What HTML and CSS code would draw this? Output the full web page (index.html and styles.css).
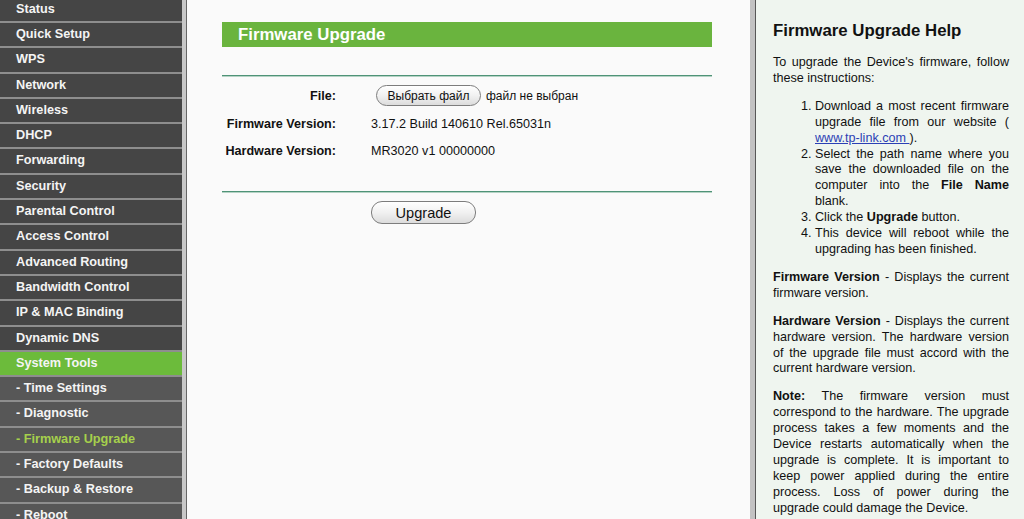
FILE: index.html
```html
<!DOCTYPE html>
<html lang="en">

<head>
    <meta charset="UTF-8">
    <title>Firmware Upgrade</title>
    <link rel="stylesheet" href="styles.css">
</head>

<body>
    <div class="frame">
        <div class="menu">
            <a class="item" href="#">Status</a>
            <a class="item" href="#">Quick Setup</a>
            <a class="item" href="#">WPS</a>
            <a class="item" href="#">Network</a>
            <a class="item" href="#">Wireless</a>
            <a class="item" href="#">DHCP</a>
            <a class="item" href="#">Forwarding</a>
            <a class="item" href="#">Security</a>
            <a class="item" href="#">Parental Control</a>
            <a class="item" href="#">Access Control</a>
            <a class="item" href="#">Advanced Routing</a>
            <a class="item" href="#">Bandwidth Control</a>
            <a class="item" href="#">IP &amp; MAC Binding</a>
            <a class="item" href="#">Dynamic DNS</a>
            <a class="item active" href="#">System Tools</a>
            <a class="item sub" href="#">- Time Settings</a>
            <a class="item sub" href="#">- Diagnostic</a>
            <a class="item sub current" href="#">- Firmware Upgrade</a>
            <a class="item sub" href="#">- Factory Defaults</a>
            <a class="item sub" href="#">- Backup &amp; Restore</a>
            <a class="item sub" href="#">- Reboot</a>
        </div>

        <div class="main">
            <div class="panel">
                <div class="title-bar">Firmware Upgrade</div>
                <div class="rule"></div>
                <div class="rows">
                    <div class="label">File:</div>
                    <div class="value">
                        <button class="pill file-btn" type="button">Выбрать файл</button>
                        <span class="file-name">файл не выбран</span>
                    </div>
                    <div class="label">Firmware Version:</div>
                    <div class="value">3.17.2 Build 140610 Rel.65031n</div>
                    <div class="label">Hardware Version:</div>
                    <div class="value">MR3020 v1 00000000</div>
                </div>
                <div class="rule"></div>
                <div class="actions">
                    <button class="pill upgrade-btn" type="button">Upgrade</button>
                </div>
            </div>
        </div>

        <div class="help">
            <h2>Firmware Upgrade Help</h2>
            <p>To upgrade the Device's firmware, follow these instructions:</p>
            <ol>
                <li>Download a most recent firmware upgrade file from our website ( <a href="#">www.tp-link.com </a>).</li>
                <li>Select the path name where you save the downloaded file on the computer into the <b>File Name</b> blank.</li>
                <li>Click the <b>Upgrade</b> button.</li>
                <li>This device will reboot while the upgrading has been finished.</li>
            </ol>
            <p><b>Firmware Version</b> - Displays the current firmware version.</p>
            <p><b>Hardware Version</b> - Displays the current hardware version. The hardware version of the upgrade file must accord with the current hardware version.</p>
            <p><b>Note:</b> The firmware version must correspond to the hardware. The upgrade process takes a few moments and the Device restarts automatically when the upgrade is complete. It is important to keep power applied during the entire process. Loss of power during the upgrade could damage the Device.</p>
        </div>
    </div>
</body>

</html>
```

FILE: styles.css
```css
body {
    margin: 0;
    font-family: "Liberation Sans", Arial, sans-serif;
    font-size: 12.6px;
    color: #111;
}

.frame {
    display: flex;
    height: 100vh;
    overflow: hidden;
}

/* left menu */
.menu {
    flex: 0 0 186px;
    box-sizing: border-box;
    background-color: #444;
    border-right: 4px solid #c8c8c8;
    margin-top: -2.3px;
}

.menu .item {
    display: block;
    height: 23.3px;
    line-height: 23.3px;
    padding-left: 16px;
    background-color: #454545;
    border-bottom: 2px solid #8e8e8e;
    color: #f4f4f4;
    font-weight: bold;
    font-size: 12.7px;
    text-decoration: none;
    white-space: nowrap;
}

.menu .item.active {
    background-color: #6cbb3b;
}

.menu .item.sub {
    background-color: #575757;
}

.menu .item.current {
    color: #a6d04c;
}

/* main content */
.main {
    flex: 0 0 569px;
    box-sizing: border-box;
    background-color: #fafafa;
    border-left: 1px solid #666;
    border-right: 5px solid #c2c2c2;
    padding: 22px 0 0 35px;
}

.panel {
    width: 490px;
}

.title-bar {
    height: 25px;
    line-height: 25px;
    padding-left: 16px;
    background-color: #6ab43e;
    color: #fff;
    font-weight: bold;
    font-size: 16.8px;
}

.rule {
    height: 1px;
    background-color: #4f9377;
    border-bottom: 1px solid #b5d3c5;
}

.title-bar + .rule {
    margin-top: 28px;
}

.rows {
    display: grid;
    grid-template-columns: 114px 1fr;
    column-gap: 35px;
    grid-auto-rows: 27.8px;
    align-items: center;
    padding: 5px 0 26px;
}

.rows .label {
    text-align: right;
    font-weight: bold;
}

.value {
    display: flex;
    align-items: center;
}

.pill {
    font-family: "Liberation Sans", Arial, sans-serif;
    color: #111;
    border: 1px solid #7d7d7d;
    border-radius: 11px;
    background: linear-gradient(#ffffff, #f1f1f1 50%, #dcdcdc);
    padding: 0;
    cursor: pointer;
}

.file-btn {
    width: 105px;
    height: 21px;
    margin-left: 5px;
    font-size: 12px;
}

.file-name {
    margin-left: 5px;
    font-size: 12px;
}

.actions {
    padding: 8px 0 0 149px;
}

.upgrade-btn {
    width: 105px;
    height: 23px;
    font-size: 14.6px;
}

/* help panel */
.help {
    flex: 1;
    background-color: #eff5ef;
    border-left: 1px solid #575757;
    padding: 21px 15px 0 17px;
    line-height: 15.9px;
    text-align: justify;
}

.help h2 {
    margin: 0 0 14px;
    font-size: 16.8px;
    line-height: 20px;
    text-align: left;
}

.help p {
    margin: 0 0 12px;
}

.help ol {
    margin: 0 0 12px;
    padding-left: 42px;
}

.help a {
    color: #2b3fb5;
}
```
